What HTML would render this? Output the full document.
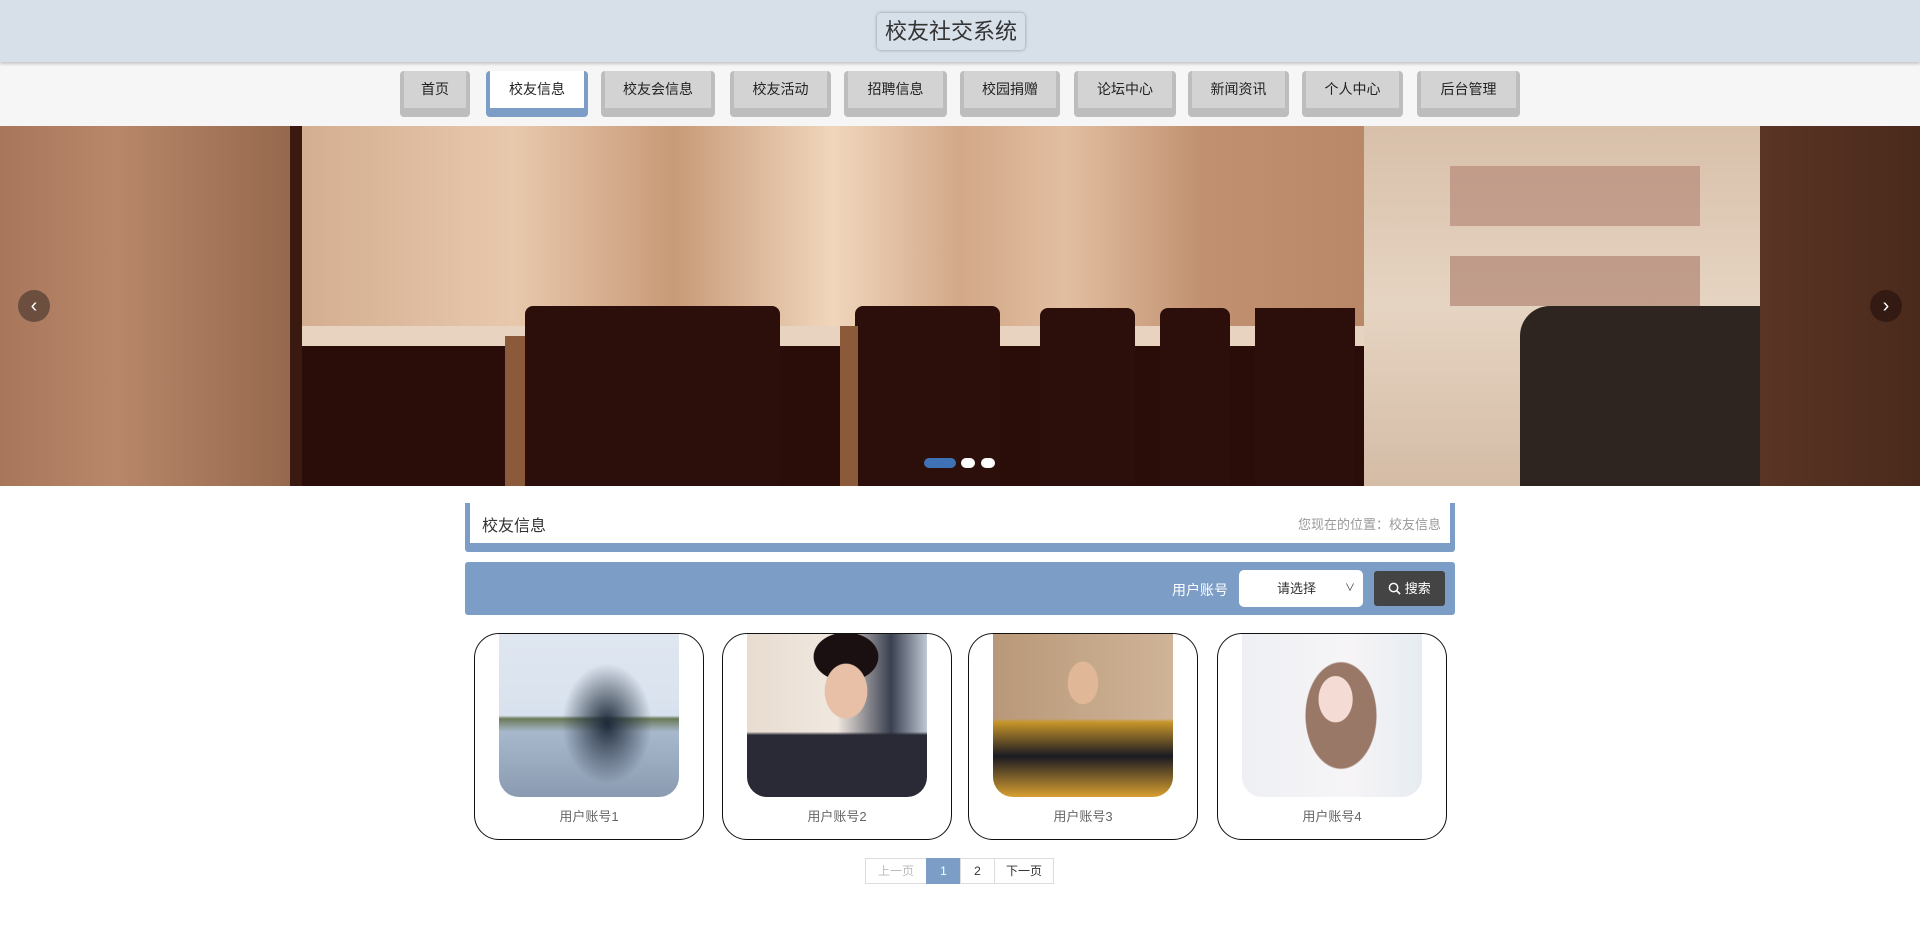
<!DOCTYPE html>
<html><head><meta charset="utf-8"><style>
*{margin:0;padding:0;box-sizing:border-box}
body{width:1920px;height:931px;background:#fff;font-family:"Liberation Sans","Noto Sans CJK SC",sans-serif;position:relative;overflow:hidden}
.a{position:absolute}
.hdr{left:0;top:0;width:1920px;height:62px;background:#d7dfe8;box-shadow:0 2px 3px rgba(0,0,0,.2);z-index:2}
.title{left:877px;top:13px;width:148px;height:37px;border-radius:4px;box-shadow:0 0 3px rgba(0,0,0,.35);font-size:22px;color:#333;text-align:center;line-height:37px}
.nav{left:0;top:62px;width:1920px;height:64px;background:#f6f6f6}
.btn{top:71px;height:46px;background:#bdbdbd;border-radius:4px}
.btn div{position:absolute;left:4px;right:4px;top:0;bottom:9px;background:#d3d3d3;font-size:14px;color:#222;text-align:center;line-height:37px}
.btn.on{background:#7b9dc6}.btn.on div{background:#fff}
.ban{left:0;top:126px;width:1920px;height:360px;overflow:hidden;background:#3a1a10}
.card{top:633px;width:230px;height:207px;border:1px solid #111;border-radius:25px;overflow:hidden}
.card .im{position:absolute;left:24px;top:0;width:180px;height:163px;border-radius:0 0 20px 20px}
.card p{position:absolute;top:172px;width:100%;text-align:center;font-size:13px;color:#666}
.pg{top:858px;height:26px;border:1px solid #ddd;font-size:12px;text-align:center;line-height:24px;color:#333}
</style></head><body>
<div class="a hdr"><div class="a title">校友社交系统</div></div>
<div class="a nav"></div>
<div class="a btn" style="left:400px;width:70px"><div>首页</div></div>
<div class="a btn on" style="left:486px;width:102px"><div>校友信息</div></div>
<div class="a btn" style="left:601px;width:114px"><div>校友会信息</div></div>
<div class="a btn" style="left:730px;width:101px"><div>校友活动</div></div>
<div class="a btn" style="left:844px;width:103px"><div>招聘信息</div></div>
<div class="a btn" style="left:960px;width:100px"><div>校园捐赠</div></div>
<div class="a btn" style="left:1074px;width:102px"><div>论坛中心</div></div>
<div class="a btn" style="left:1188px;width:101px"><div>新闻资讯</div></div>
<div class="a btn" style="left:1302px;width:101px"><div>个人中心</div></div>
<div class="a btn" style="left:1417px;width:103px"><div>后台管理</div></div>

<div class="a ban">
 <div class="a" style="left:0;top:0;width:290px;height:360px;background:linear-gradient(90deg,#a8765a,#b8876a 40%,#96684d)"></div>
 <div class="a" style="left:290px;top:0;width:12px;height:360px;background:#3a1a10"></div>
 <div class="a" style="left:302px;top:0;width:1062px;height:210px;background:linear-gradient(90deg,#d4ae90,#e8c8ac 20%,#c89a78 35%,#f0d6bc 50%,#d2a888 62%,#e2bea0 72%,#c09070 85%,#b88868)"></div>
 <div class="a" style="left:302px;top:200px;width:1062px;height:20px;background:#e8d2c0"></div>
 <div class="a" style="left:302px;top:220px;width:1062px;height:140px;background:#2a0d08"></div>
 <div class="a" style="left:525px;top:180px;width:255px;height:180px;background:#2c0f0a;border-radius:8px 8px 0 0"></div>
 <div class="a" style="left:855px;top:180px;width:145px;height:180px;background:#2c0f0a;border-radius:8px 8px 0 0"></div>
 <div class="a" style="left:1040px;top:182px;width:95px;height:178px;background:#2c0f0a;border-radius:8px 8px 0 0"></div>
 <div class="a" style="left:1160px;top:182px;width:70px;height:178px;background:#2c0f0a;border-radius:8px 8px 0 0"></div>
 <div class="a" style="left:1255px;top:182px;width:100px;height:178px;background:#2c0f0a"></div>
 <div class="a" style="left:505px;top:210px;width:20px;height:150px;background:#8a5a3a"></div>
 <div class="a" style="left:840px;top:200px;width:18px;height:160px;background:#8a5a3a"></div>
 <div class="a" style="left:1364px;top:0;width:396px;height:360px;background:linear-gradient(180deg,#d8c0aa,#e6d4c2 50%,#d4bca6)"></div>
 <div class="a" style="left:1450px;top:40px;width:250px;height:60px;background:#b08070;opacity:.6"></div>
 <div class="a" style="left:1450px;top:130px;width:250px;height:50px;background:#a87868;opacity:.6"></div>
 <div class="a" style="left:1520px;top:180px;width:240px;height:180px;background:#2e2420;border-radius:30px 0 0 0"></div>
 <div class="a" style="left:1760px;top:0;width:160px;height:360px;background:linear-gradient(90deg,#5a3424,#4a2a1c)"></div>
 <div class="a" style="left:18px;top:164px;width:32px;height:32px;border-radius:50%;background:rgba(80,60,50,.7);color:#fff;text-align:center;line-height:32px;font-size:20px">‹</div>
 <div class="a" style="left:1870px;top:164px;width:32px;height:32px;border-radius:50%;background:rgba(40,20,15,.7);color:#fff;text-align:center;line-height:32px;font-size:20px">›</div>
 <div class="a" style="left:924px;top:332px;width:32px;height:10px;border-radius:5px;background:#3f72b4"></div>
 <div class="a" style="left:961px;top:332px;width:14px;height:10px;border-radius:5px;background:#fff"></div>
 <div class="a" style="left:981px;top:332px;width:14px;height:10px;border-radius:5px;background:#fff"></div>
</div>

<div class="a" style="left:465px;top:503px;width:990px;height:49px;background:#7b9dc6;border-radius:0 0 3px 3px"><div class="a" style="left:5px;top:0;right:5px;bottom:9px;background:#fff"></div></div>
<div class="a" style="left:482px;top:512px;font-size:16px;color:#333">校友信息</div>
<div class="a" style="left:1298px;top:514px;font-size:13px;color:#999">您现在的位置：校友信息</div>

<div class="a" style="left:465px;top:562px;width:990px;height:53px;background:#7b9dc6;border-radius:3px"></div>
<div class="a" style="left:1172px;top:580px;font-size:14px;color:#fff">用户账号</div>
<div class="a" style="left:1239px;top:570px;width:124px;height:37px;background:#fff;border-radius:5px;font-size:13px;color:#333;line-height:37px;padding-left:38px">请选择<span style="position:absolute;right:8px;font-size:10px">&#8744;</span></div>
<div class="a" style="left:1374px;top:571px;width:71px;height:35px;background:#444;border-radius:3px;color:#fff;font-size:13px;line-height:35px;text-align:center"><svg width="13" height="13" viewBox="0 0 14 14" style="vertical-align:-2px"><circle cx="6" cy="6" r="4.5" fill="none" stroke="#fff" stroke-width="1.6"/><path d="M9.3 9.3L13 13" stroke="#fff" stroke-width="1.8"/></svg> 搜索</div>

<div class="a card" style="left:474px"><div class="im" style="background:radial-gradient(ellipse 45px 60px at 60% 55%,#1e2a3a,transparent),linear-gradient(180deg,#dfe6f0 0,#d8e2ee 50%,#6a7a5a 52%,#a8b8cc 60%,#8a9ab0)"></div><p>用户账号1</p></div>
<div class="a card" style="left:722px"><div class="im" style="background:radial-gradient(ellipse 35px 45px at 55% 35%,#e8c0a8 60%,transparent 62%),radial-gradient(ellipse 40px 30px at 55% 14%,#1a1012 80%,transparent 82%),linear-gradient(180deg,transparent 60%,#2a2a36 62%),linear-gradient(90deg,#e8dcd0,#f0e8e0 50%,#3a4050 80%,#c0c8d4)"></div><p>用户账号2</p></div>
<div class="a card" style="left:968px"><div class="im" style="background:radial-gradient(ellipse 25px 35px at 50% 30%,#e0b898 60%,transparent 62%),linear-gradient(180deg,transparent 52%,#c8962a 54%,#1a1a22 75%,#d8a030),linear-gradient(90deg,#b89878,#d0b498)"></div><p>用户账号3</p></div>
<div class="a card" style="left:1217px"><div class="im" style="background:radial-gradient(ellipse 28px 38px at 52% 40%,#f4dcd4 60%,transparent 62%),radial-gradient(ellipse 50px 75px at 55% 50%,#9a7868 70%,transparent 72%),linear-gradient(90deg,#eef0f4,#f6f4f6 60%,#e6ecf2)"></div><p>用户账号4</p></div>

<div class="a pg" style="left:865px;width:62px;color:#bbb">上一页</div>
<div class="a pg" style="left:926px;width:35px;background:#7b9dc6;border-color:#7b9dc6;color:#fff">1</div>
<div class="a pg" style="left:960px;width:35px">2</div>
<div class="a pg" style="left:994px;width:60px">下一页</div>
</body></html>
